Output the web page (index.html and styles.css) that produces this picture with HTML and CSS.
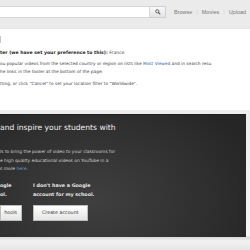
FILE: index.html
```html
<!DOCTYPE html>
<html lang="en">
<head>
    <meta charset="UTF-8">
    <title>YouTube for Schools</title>
    <link rel="stylesheet" href="styles.css">
</head>
<body>
    <div class="masthead">
        <div class="search-box"></div>
        <button class="search-btn">
            <svg width="6" height="6" viewBox="0 0 6 6">
                <circle cx="2.3" cy="2.3" r="1.6" fill="none" stroke="#555" stroke-width="0.9"/>
                <path d="M3.4 3.4 L5.3 5.3" stroke="#555" stroke-width="1.1"/>
            </svg>
        </button>
        <div class="nav">
            <a href="#">Browse</a>
            <span class="sep">|</span>
            <a href="#">Movies</a>
            <span class="sep">|</span>
            <a href="#">Upload</a>
        </div>
    </div>

    <div class="content">
        <div class="tab-edge"></div>
        <p class="filter-title"><b>ter (we have set your preference to this):</b> France</p>
        <p class="desc">ou popular videos from the selected country or region on lists like <a href="#">Most Viewed</a> and in search resu<br>he links in the footer at the bottom of the page.</p>
        <p class="desc note">tting, or click "Cancel" to set your location filter to "Worldwide".</p>
    </div>

    <div class="promo-wrap">
        <div class="promo">
            <h2 class="promo-title">and inspire your students with</h2>
            <p class="promo-text">ls to bring the power of video to your classrooms for<br>e high quality educational videos on YouTube in a<br>s more <a href="#">here</a>.</p>
            <div class="choices">
                <div class="choice choice-left">
                    <p class="choice-label">ogle<br>ol.</p>
                    <button class="btn">hools</button>
                </div>
                <div class="choice">
                    <p class="choice-label">I don't have a Google<br>account for my school.</p>
                    <button class="btn">Create account</button>
                </div>
            </div>
        </div>
    </div>
</body>
</html>
```

FILE: styles.css
```css
* { margin: 0; padding: 0; box-sizing: border-box; }

body {
    font-family: "DejaVu Sans", Verdana, sans-serif;
    background: #ffffff;
    color: #333333;
    width: 250px;
    height: 250px;
    overflow: hidden;
}

a {
    text-decoration: none;
}

.masthead {
    display: flex;
    align-items: flex-start;
    height: 29px;
    padding-top: 6px;
    background: #ebebeb;
    border-bottom: 1px solid #e4e4e4;
}

.search-box {
    width: 150px;
    height: 12px;
    background: #ffffff;
    border: 1px solid #d8d8d8;
    border-left: none;
}

.search-btn {
    display: flex;
    align-items: center;
    justify-content: center;
    width: 16px;
    height: 12px;
    background: linear-gradient(#f8f8f8, #e4e4e4);
    border: 1px solid #cfcfcf;
    border-left: none;
}

.nav {
    display: flex;
    align-items: center;
    gap: 4px;
    height: 12px;
    margin-left: 8px;
    font-family: "Liberation Sans", Arial, sans-serif;
    font-size: 5.5px;
}

.nav a {
    color: #777777;
}

.sep {
    color: #cccccc;
}

.content {
    padding-top: 7px;
    font-size: 4.3px;
}

.tab-edge {
    width: 1px;
    height: 7px;
    background: #c8c8c8;
    margin-bottom: 7px;
}

.filter-title {
    font-size: 4.6px;
    color: #444444;
}

.filter-title b {
    font-weight: bold;
    color: #222222;
}

.desc {
    margin-top: 5px;
    line-height: 8px;
    color: #444444;
}

.desc a {
    color: #2a5db0;
}

.note {
    margin-top: 4px;
}

.promo-wrap {
    margin-top: 22px;
    height: 140px;
    padding: 4px 4px 0 0;
    background: linear-gradient(#ededed, #f6f6f6 126px, #d8d8d8 127px, #f2f2f2 131px, #e6e6e6);
}

.promo {
    height: 123px;
    padding-top: 8px;
    background: radial-gradient(ellipse 170px 120px at 95px 85px, #3f3f3f, #2e2e2e 70%, #262626);
    border-top: 1px solid #1e1e1e;
    color: #d4d4d4;
}

.promo-title {
    font-size: 7.6px;
    font-weight: normal;
    color: #eeeeee;
    line-height: 10px;
}

.promo-text {
    margin-top: 15px;
    font-size: 4.4px;
    line-height: 8.7px;
    color: #d0d0d0;
}

.promo-text a {
    color: #6f93d6;
}

.choices {
    display: flex;
    gap: 11px;
    margin-top: 7px;
}

.choice-label {
    font-size: 4.8px;
    font-weight: bold;
    line-height: 9px;
    color: #e6e6e6;
}

.choice-left {
    width: 22px;
}

.btn {
    margin-top: 1px;
    height: 16px;
    padding: 0 8px;
    font-family: "DejaVu Sans", Verdana, sans-serif;
    font-size: 4.8px;
    color: #333333;
    background: linear-gradient(#ffffff, #e4e4e4);
    border: 1px solid #bdbdbd;
}

.choice-left .btn {
    width: 22px;
    padding: 0;
    text-align: right;
    padding-right: 4px;
}
```
